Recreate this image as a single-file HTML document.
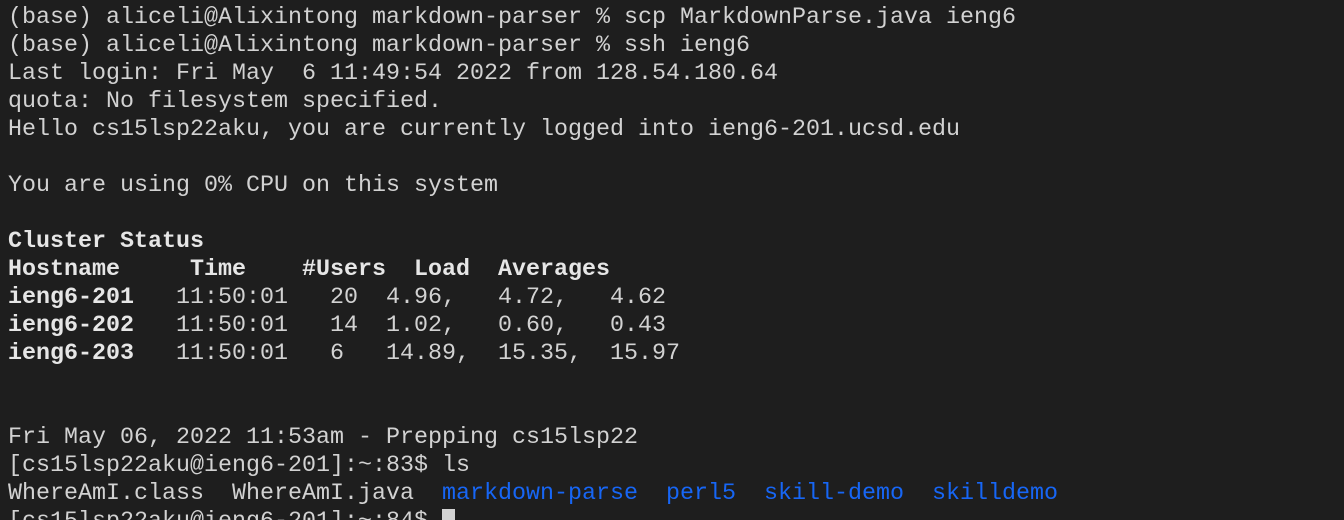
<!DOCTYPE html>
<html><head><meta charset="utf-8"><style>
html,body{margin:0;padding:0;background:#1e1e1e;width:1344px;height:520px;overflow:hidden}
pre{margin:0;padding:4px 0 0 8px;font-family:"Liberation Mono","DejaVu Sans Mono",monospace;font-size:23.33px;line-height:28px;color:#d2d2d2;white-space:pre}
b{font-weight:bold;color:#e6e6e6}
.bl{color:#1766f5}
.cur{display:inline-block;width:13px;height:22px;background:#d2d2d2;vertical-align:-4px}
</style></head><body><pre>(base) aliceli@Alixintong markdown-parser % scp MarkdownParse.java ieng6
(base) aliceli@Alixintong markdown-parser % ssh ieng6
Last login: Fri May  6 11:49:54 2022 from 128.54.180.64
quota: No filesystem specified.
Hello cs15lsp22aku, you are currently logged into ieng6-201.ucsd.edu

You are using 0% CPU on this system

<b>Cluster Status</b>
<b>Hostname     Time    #Users  Load  Averages</b>
<b>ieng6-201</b>   11:50:01   20  4.96,   4.72,   4.62
<b>ieng6-202</b>   11:50:01   14  1.02,   0.60,   0.43
<b>ieng6-203</b>   11:50:01   6   14.89,  15.35,  15.97


Fri May 06, 2022 11:53am - Prepping cs15lsp22
[cs15lsp22aku@ieng6-201]:~:83$ ls
WhereAmI.class  WhereAmI.java  <span class="bl">markdown-parse</span>  <span class="bl">perl5</span>  <span class="bl">skill-demo</span>  <span class="bl">skilldemo</span>
[cs15lsp22aku@ieng6-201]:~:84$ <span class="cur"></span></pre></body></html>
